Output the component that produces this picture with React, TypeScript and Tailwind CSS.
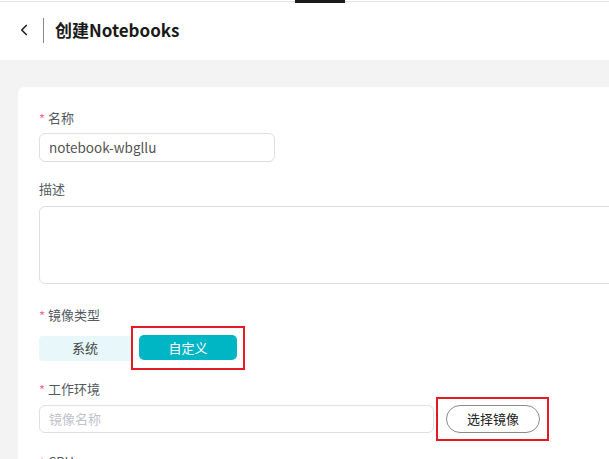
import { ChevronLeft } from 'lucide-react'

const font = { fontFamily: '"Noto Sans CJK SC", "Noto Sans", sans-serif' }

function Label({ text, required = true }: { text: string; required?: boolean }) {
  return (
    <div className="flex items-center h-5 text-[13px] text-[#555a61]">
      {required && <span className="w-[9px] text-[#f56c8a] text-[13px] leading-none">*</span>}
      <span>{text}</span>
    </div>
  )
}

export default function App() {
  return (
    <div className="w-full h-[459px] overflow-hidden bg-[#f3f3f3]" style={font}>
      {/* Header */}
      <div className="relative h-[60px] bg-white">
        <div className="absolute top-[1px] left-0 right-0 h-px bg-[#e6e6e6]" />
        <div className="absolute top-0 left-[295px] w-[50px] h-[3px] bg-[#1a1a1a]" />
        <div className="flex items-center h-full pl-[15px]">
          <ChevronLeft className="w-[18px] h-[18px] text-[#222]" strokeWidth={2.2} />
          <div className="ml-[10px] w-px h-[25px] bg-[#888]" />
          <h1 className="ml-[11px] text-[17px] font-bold text-[#1a1a1a]">创建Notebooks</h1>
        </div>
      </div>

      {/* Body */}
      <div className="pl-[18px] pt-[27px]">
        <div className="bg-white rounded-tl-[6px] -mr-4 pl-[21px] pt-[21px] h-[400px]">
          <Label text="名称" />
          <div className="mt-[5px] w-[236px] h-[29px] border border-[#dcdfe6] rounded-[6px] flex items-center px-[9px] text-[13.5px] text-[#555]">
            notebook-wbgllu
          </div>

          <div className="mt-[17px]">
            <Label text="描述" required={false} />
          </div>
          <div className="mt-[7px] h-[78px] border border-[#dcdfe6] rounded-[6px]" />

          <div className="mt-[21px]">
            <Label text="镜像类型" />
          </div>
          <div className="mt-px flex items-center">
            <div className="w-[92px] h-[25px] rounded-l-[4px] bg-[#e7f7fa] flex items-center justify-center text-[13px] text-[#444]">
              系统
            </div>
            <div className="border-2 border-[#e31b23] pl-[6px] pr-[6px] pt-[7px] pb-[8px]">
              <div className="w-[98px] h-[25px] rounded-[5px] bg-[#00b5c4] flex items-center justify-center text-[13px] text-white">
                自定义
              </div>
            </div>
          </div>

          <div className="mt-[9px]">
            <Label text="工作环境" />
          </div>
          <div className="-mt-[2px] flex items-center">
            <div className="w-[395px] h-[28px] border border-[#dcdfe6] rounded-[6px] flex items-center px-[9px] text-[13px] text-[#c0c4cc]">
              镜像名称
            </div>
            <div className="ml-[2px] border-2 border-[#e31b23] pl-[8px] pr-[7px] pt-[6px] pb-[6px]">
              <button className="w-[94px] h-[28px] rounded-full border border-[#8a8a8a] bg-white text-[13px] text-[#222] flex items-center justify-center">
                选择镜像
              </button>
            </div>
          </div>

          <div className="mt-[11px]">
            <Label text="CPU" />
          </div>
        </div>
      </div>
    </div>
  )
}
